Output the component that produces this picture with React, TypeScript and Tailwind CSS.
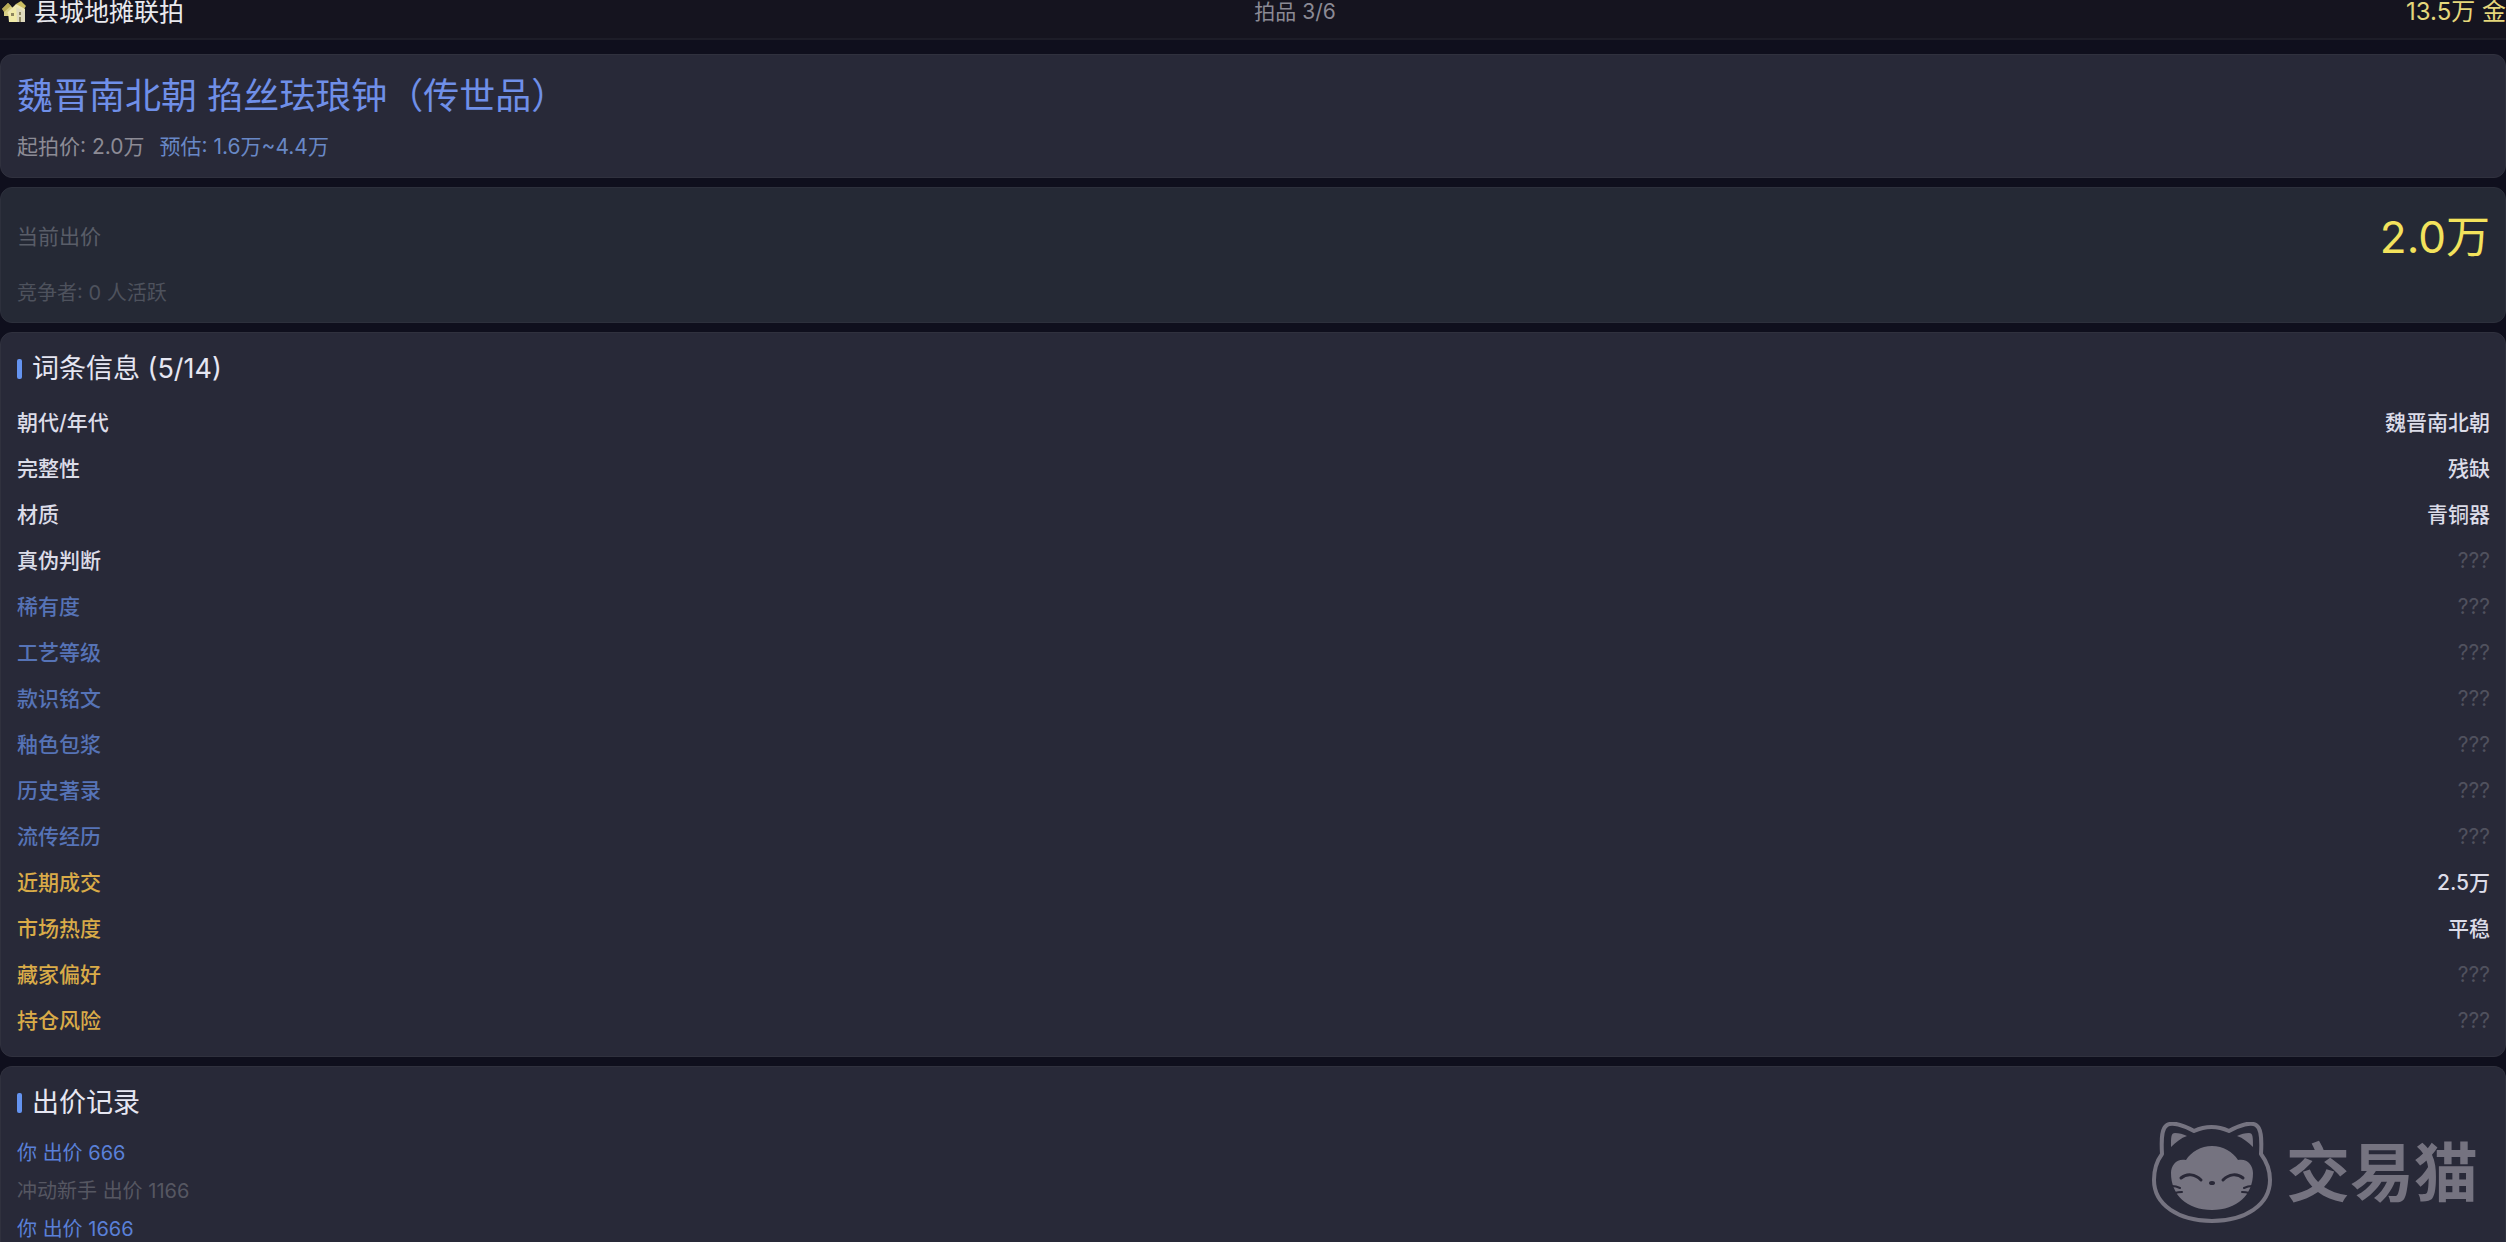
type Tone = "base" | "blue" | "gold";

const TONE: Record<Tone, string> = {
  base: "text-[#dcdce8]",
  blue: "text-[#5673b6]",
  gold: "text-[#d9ab48]",
};

const ENTRIES: { label: string; tone: Tone; value?: string }[] = [
  { label: "朝代/年代", tone: "base", value: "魏晋南北朝" },
  { label: "完整性", tone: "base", value: "残缺" },
  { label: "材质", tone: "base", value: "青铜器" },
  { label: "真伪判断", tone: "base" },
  { label: "稀有度", tone: "blue" },
  { label: "工艺等级", tone: "blue" },
  { label: "款识铭文", tone: "blue" },
  { label: "釉色包浆", tone: "blue" },
  { label: "历史著录", tone: "blue" },
  { label: "流传经历", tone: "blue" },
  { label: "近期成交", tone: "gold", value: "2.5万" },
  { label: "市场热度", tone: "gold", value: "平稳" },
  { label: "藏家偏好", tone: "gold" },
  { label: "持仓风险", tone: "gold" },
];

const BIDS = [
  { who: "你", amount: 666, mine: true },
  { who: "冲动新手", amount: 1166, mine: false },
  { who: "你", amount: 1666, mine: true },
];

function HousesIcon() {
  return (
    <svg viewBox="0 0 24 22" className="h-[22px] w-6 shrink-0" aria-hidden>
      <path d="M0 8 6 2l5 5v8H2V9z" fill="#d8cf86" />
      <path d="M0 8 6 2l3 3-7 6z" fill="#b9ab55" />
      <path d="M14 3 19 0l5 5-2 3-6-2z" fill="#cdbf62" />
      <path d="M6 11 14 4l3 2v15H7z" fill="#f0eaa8" />
      <path d="M14 4 23 8v13h-8z" fill="#ded9bd" />
      <path d="M5 12 14 3l9 5-1 2-8-4-7 7z" fill="#eee7b4" />
      <path d="M9 12h3v3H9zM17 11h2v3h-2zM17 16h2v5h-2z" fill="#8d8560" />
    </svg>
  );
}

/** Section heading with the small blue bar in front. */
function SectionTitle({ children }: { children: React.ReactNode }) {
  return (
    <h2 className="flex items-center gap-[10px] text-[27px] leading-10 text-[#e6e6f2]">
      <span className="h-5 w-[5px] rounded-xs bg-[#6493f0]" aria-hidden />
      {children}
    </h2>
  );
}

function Watermark() {
  return (
    <div className="pointer-events-none absolute right-[28px] bottom-6 flex items-center gap-[14px] text-[#757380]">
      <svg viewBox="0 0 120 102" className="h-[102px] w-[120px]" aria-hidden>
        <path
          d="M42 9C31 3 20 0 15 3c-5 3-6 12-5 29C4 40 2 48 2 58c0 25 25 41 58 41s58-16 58-41c0-10-3-18-9-26 1-17 0-26-5-29-5-3-16 0-27 6C66 4 53 4 42 9Z"
          fill="none"
          stroke="currentColor"
          strokeWidth="4"
          strokeLinejoin="round"
        />
        <path
          d="M19 25c0-10 0-14 4-14 4 0 8 1 12 3-6 2-11 6-16 11ZM101 25c0-10 0-14-4-14-4 0-8 1-12 3 6 2 11 6 16 11Z"
          fill="currentColor"
        />
        <path
          d="M34 38c5-8 15-14 26-14s21 6 26 14c9-2 15 5 15 13 0 22-16 37-41 37S19 73 19 51c0-8 6-15 15-13Z"
          fill="currentColor"
        />
        <g fill="none" stroke="#292837" strokeLinecap="round">
          <path d="M29 56c6-5 14-4 20 2M91 56c-6-5-14-4-20 2" strokeWidth="3" />
          <path
            d="M20 64c3 0 6 1 8 2M23 71c3-1 5-1 7-1M100 64c-3 0-6 1-8 2M97 71c-3-1-5-1-7-1"
            strokeWidth="2"
          />
        </g>
        <ellipse cx="60" cy="61" rx="3" ry="2" fill="#292837" />
      </svg>
      <span className="text-[64px] leading-[72px] font-bold">交易猫</span>
    </div>
  );
}

const CARD = "border border-[#30313e] bg-[#282938] pl-4 pr-[15px]";

export default function App() {
  return (
    <div className="relative flex min-h-screen flex-col overflow-hidden bg-[#0f0f1d] font-['Inter','Noto_Sans_CJK_SC',sans-serif]">
      <header className="flex items-center justify-between border-b-2 border-[#1d1d28] bg-[#15141f] pb-[14px]">
        <h1 className="flex items-center gap-2 pl-[2px] text-[25px] leading-6 text-[#e9e9ee]">
          <HousesIcon />
          县城地摊联拍
        </h1>
        <span className="text-[21px] leading-6 text-[#8b8a95]">拍品 3/6</span>
        <span className="text-2xl leading-6 text-[#e5d77c]">13.5万 金</span>
      </header>

      <main className="flex flex-1 flex-col gap-[9px] pt-[14px]">
        <section className={`${CARD} rounded-xl pt-4 pb-[15px]`}>
          <h2 className="text-4xl leading-[50px] text-[#6f8fe8]">
            魏晋南北朝 掐丝珐琅钟（传世品）
          </h2>
          <p className="mt-[11px] flex gap-[15px] text-[21px] leading-[30px]">
            <span className="text-[#8c8b95]">起拍价: 2.0万</span>
            <span className="text-[#6888c6]">预估: 1.6万~4.4万</span>
          </p>
        </section>

        <section className="rounded-xl border border-[#2d303c] bg-[#252935] pt-[21px] pr-[15px] pb-[14px] pl-4">
          <div className="flex items-center justify-between">
            <span className="text-[21px] text-[#595d68]">当前出价</span>
            <strong className="text-[44px] leading-[56px] font-normal text-[#f3e25c]">2.0万</strong>
          </div>
          <p className="mt-[13px] text-xl leading-[30px] text-[#4e525d]">竞争者: 0 人活跃</p>
        </section>

        <section className={`${CARD} rounded-xl pt-4 pb-3`}>
          <SectionTitle>词条信息 (5/14)</SectionTitle>
          <table className="mt-[11px] w-full text-[21px]">
            <tbody>
              {ENTRIES.map((e) => (
                <tr key={e.label} className="h-[46px]">
                  <th scope="row" className={`p-0 text-left font-medium ${TONE[e.tone]}`}>
                    {e.label}
                  </th>
                  <td
                    className={`p-0 text-right ${e.value ? "font-medium text-[#dcdce8]" : "text-[#50515e]"}`}
                  >
                    {e.value ?? "???"}
                  </td>
                </tr>
              ))}
            </tbody>
          </table>
        </section>

        <section className={`${CARD} flex-1 rounded-t-xl border-b-0 pt-4`}>
          <SectionTitle>出价记录</SectionTitle>
          <ul className="mt-[11px] text-xl leading-[38px]">
            {BIDS.map((b) => (
              <li key={b.amount} className={b.mine ? "text-[#5a80d8]" : "text-[#565762]"}>
                {b.who} 出价 {b.amount}
              </li>
            ))}
          </ul>
        </section>
      </main>

      <Watermark />
    </div>
  );
}
